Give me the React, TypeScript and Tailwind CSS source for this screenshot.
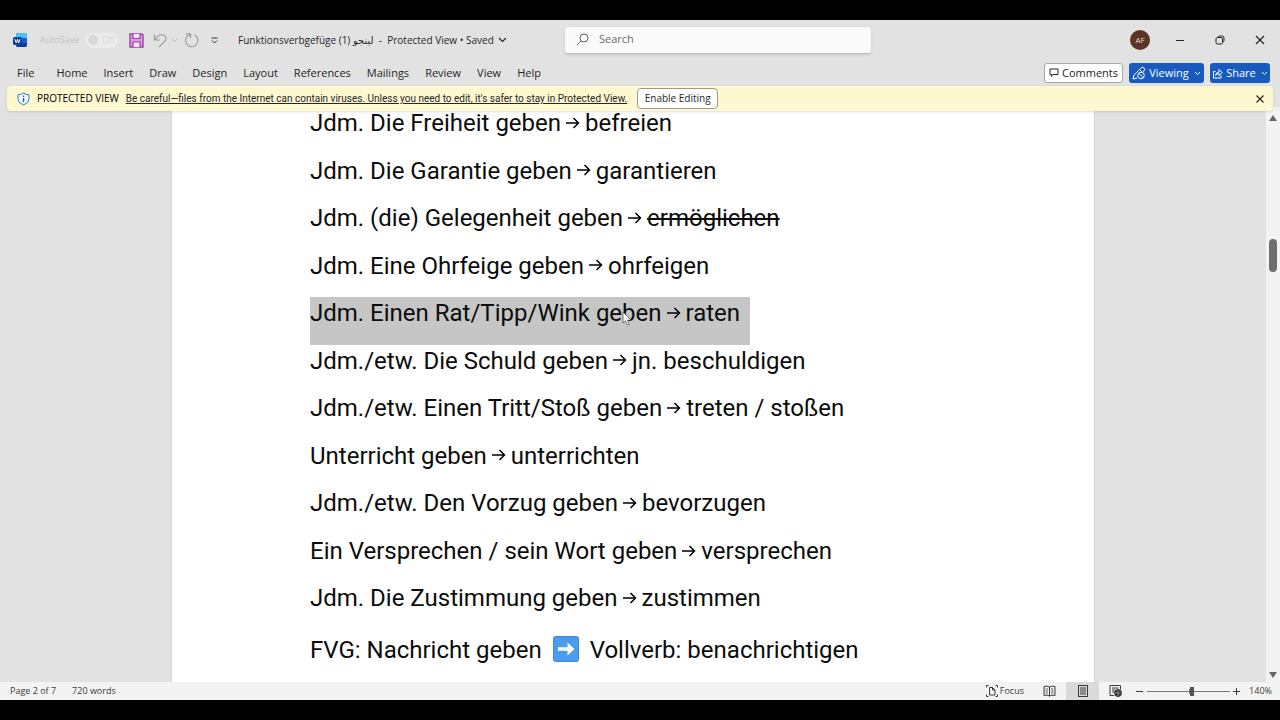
import { useState } from 'react'
import type { ReactNode } from 'react'
import { clsx } from 'clsx'

const tabs = ['Home', 'Insert', 'Draw', 'Design', 'Layout', 'References', 'Mailings', 'Review', 'View', 'Help']

interface Line {
  source: string
  target: string
  struck?: boolean
  selected?: boolean
}

const lines: Line[] = [
  { source: 'Jdm. Die Freiheit geben', target: 'befreien' },
  { source: 'Jdm. Die Garantie geben', target: 'garantieren' },
  { source: 'Jdm. (die) Gelegenheit geben', target: 'ermöglichen', struck: true },
  { source: 'Jdm. Eine Ohrfeige geben', target: 'ohrfeigen' },
  { source: 'Jdm. Einen Rat/Tipp/Wink geben', target: 'raten', selected: true },
  { source: 'Jdm./etw. Die Schuld geben', target: 'jn. beschuldigen' },
  { source: 'Jdm./etw. Einen Tritt/Stoß geben', target: 'treten / stoßen' },
  { source: 'Unterricht geben', target: 'unterrichten' },
  { source: 'Jdm./etw. Den Vorzug geben', target: 'bevorzugen' },
  { source: 'Ein Versprechen / sein Wort geben', target: 'versprechen' },
  { source: 'Jdm. Die Zustimmung geben', target: 'zustimmen' },
]

interface IconProps {
  w: number
  h: number
  className?: string
  children: ReactNode
}

function Icon({ w, h, className, children }: IconProps) {
  return (
    <svg
      width={w}
      height={h}
      viewBox={`0 0 ${w} ${h}`}
      fill="none"
      stroke="currentColor"
      className={clsx('shrink-0', className)}
      aria-hidden="true"
    >
      {children}
    </svg>
  )
}

function WordLogo() {
  return (
    <Icon w={14} h={14}>
      <g stroke="none">
        <rect x="3" y="0" width="11" height="14" rx="2" fill="#1b5be0" />
        <path d="M5 0h7a2 2 0 0 1 2 2v3H3V2a2 2 0 0 1 2-2z" fill="#4cc2f5" />
        <path d="M3 10h11v2a2 2 0 0 1-2 2H5a2 2 0 0 1-2-2z" fill="#123a9c" />
        <rect x="0" y="4" width="9" height="8" rx="1.5" fill="#0c3f9e" />
      </g>
      <path d="M2 6.2l1.2 3.6 1.3-3.4 1.3 3.4L7 6.2" stroke="#fff" strokeWidth="1" />
    </Icon>
  )
}

function Chevron({ className }: { className?: string }) {
  return (
    <Icon w={7} h={5} className={className}>
      <path d="M1 1l2.5 2.5L6 1" />
    </Icon>
  )
}

function TitleBar() {
  const [query, setQuery] = useState('')

  return (
    <div className="grid h-10 grid-cols-[565fr_306fr_409fr] items-center">
      <div className="flex min-w-0 items-center pl-[13px] whitespace-nowrap">
        <WordLogo />
        <label className="ml-[13px] flex items-center gap-2 text-[9px] text-[#c3c3c3]">
          <span className="w-[37px]">AutoSave</span>
          <input type="checkbox" disabled className="peer sr-only" />
          <span className="flex h-[15px] w-[33px] items-center gap-1 rounded-full bg-[#ebebeb] px-[3px] text-[#d6d6d6]">
            <span className="h-[10px] w-[10px] rounded-full bg-[#d8d8d8]" />
            Off
          </span>
        </label>
        <button aria-label="Save" className="ml-[11px]">
          <Icon w={15} h={15} className="text-[#9b3fa8]">
            <path d="M1 1h12l1 1v12H1z" fill="#d9a0e0" strokeWidth="1.4" />
            <path d="M4 1v4.5h7V1M4 14V9h7v5" fill="#f3e6f5" strokeWidth="1.2" />
          </Icon>
        </button>
        <button aria-label="Undo" className="ml-[9px] text-[#9c9c9c]">
          <Icon w={14} h={15}>
            <path d="M1.5 1.5V7H7M1.8 6.7L5 3.2c3-3.2 8.5-1 7.9 3-.2 1.2-.9 2-1.6 2.7L6 14" strokeWidth="1.2" />
          </Icon>
        </button>
        <button aria-label="Undo options" className="ml-1 text-[#b5b5b5]"><Chevron /></button>
        <button aria-label="Redo" className="ml-[6px] text-[#9c9c9c]">
          <Icon w={15} h={15}>
            <path d="M2 .8h4.5v4.5M6.3 1.5A6.2 6.2 0 1 0 10.5 2" strokeWidth="1.2" />
          </Icon>
        </button>
        <button aria-label="Customize toolbar" className="ml-3 text-[#333]">
          <Icon w={7} h={7}>
            <path d="M.5 1h6M1 3.5l2.5 2.5L6 3.5" />
          </Icon>
        </button>
        <button className="ml-5 flex items-center gap-1 text-[10px] text-[#262626]">
          <span className="whitespace-pre">Funktionsverbgefüge (1) لينجو  -  Protected View • Saved</span>
          <Icon w={9} h={6}>
            <path d="M1 1l3.5 3.5L8 1" strokeWidth="1.2" />
          </Icon>
        </button>
      </div>

      <label className="flex h-[27px] items-center gap-[10px] rounded-[3px] border-b border-[#c0c0c0] bg-[#fafafa] pl-[11px] text-[#666] shadow-sm">
        <Icon w={13} h={13}>
          <circle cx="8" cy="5" r="4" />
          <path d="M5 8L1 12" />
        </Icon>
        <input
          type="search"
          aria-label="Search"
          placeholder="Search"
          value={query}
          onChange={e => setQuery(e.target.value)}
          className="min-w-0 flex-1 bg-transparent text-[11px] outline-none placeholder:text-[#6b6b6b]"
        />
      </label>

      <div className="flex items-center justify-end pr-[14px] text-[#222]">
        <button className="h-5 w-5 rounded-full bg-[#5b3427] text-[8px] text-[#e9d9d2]">AF</button>
        <button aria-label="Minimize" className="ml-[25px]">
          <Icon w={10} h={10}><path d="M1 5.5h8" /></Icon>
        </button>
        <button aria-label="Restore" className="ml-[30px]">
          <Icon w={10} h={10}>
            <rect x="1" y="2.5" width="6.5" height="6.5" rx="1.5" />
            <path d="M3 2.2Q3 1 4.5 1H7q2 0 2 2v2.5Q9 7 7.8 7" />
          </Icon>
        </button>
        <button aria-label="Close" className="ml-[29px]">
          <Icon w={12} h={12}><path d="M2 2l8 8M10 2l-8 8" strokeWidth="1.2" /></Icon>
        </button>
      </div>
    </div>
  )
}

function RibbonTabs() {
  return (
    <div className="flex h-[26px] items-center pr-[10px] pl-[17px] text-[11px] text-[#262626]">
      <nav className="flex items-center gap-4">
        <button className="mr-[6px]">File</button>
        {tabs.map(tab => <button key={tab}>{tab}</button>)}
      </nav>
      <div className="ml-auto flex items-center gap-[6px]">
        <button className="flex h-5 w-[79px] items-center justify-center gap-[3px] rounded-[3px] border border-[#a8a8a8] bg-white">
          <Icon w={10} h={10}>
            <path d="M1 1h8v5.5H4L2.5 8.5V6.5H1z" />
          </Icon>
          Comments
        </button>
        <button className="flex h-5 w-[75px] items-center justify-center gap-[3px] rounded-[3px] bg-[#185abd] text-white">
          <Icon w={14} h={14}>
            <path d="M1 13l1-4 7-7q1.5-1.5 3 0t0 3L11 6M1 13l4-1" />
            <path d="M7.500 3.500l3 3" />
            <circle cx="9" cy="9.500" r="3.300" />
            <path d="M6.800 7.300l4.500 4.500" />
          </Icon>
          Viewing
          <Chevron className="ml-[2px]" />
        </button>
        <button className="flex h-5 w-[60px] items-center justify-center gap-[3px] rounded-[3px] bg-[#185abd] text-white">
          <Icon w={11} h={11}>
            <path d="M3.500 3.500H1.500v6.500h7.500V7.500" />
            <path d="M3.500 7.500Q4 4 7 4V1.500L10.200 4.700 7 7.500V5.700Q5 5.700 3.500 7.500z" />
          </Icon>
          Share
          <Chevron className="ml-[2px]" />
        </button>
      </div>
    </div>
  )
}

function ProtectedBar() {
  const [open, setOpen] = useState(true)
  if (!open) return null

  return (
    <div className="mx-[7px] flex h-[25px] items-center rounded-[4px] bg-[#fdf8d0] pr-[7px] pl-[10px] text-[10px] whitespace-nowrap text-[#262626] shadow-sm">
      <Icon w={13} h={14} className="text-[#2f7fa8]">
        <path d="M6.500 1Q9 2.800 12 2.800V7q0 4-5.500 6Q1 11 1 7V2.800Q4 2.800 6.500 1z" fill="#f4fbff" />
        <path d="M6.500 3.500V5M6.500 6v4" stroke="#1d62c4" strokeWidth="1.500" />
      </Icon>
      <span className="ml-[7px] text-black">PROTECTED VIEW</span>
      <a href="#protected-view" className="ml-[7px] font-['Roboto',sans-serif] underline">
        Be careful—files from the Internet can contain viruses. Unless you need to edit, it's safer to stay in Protected View.
      </a>
      <button className="ml-[10px] h-[21px] w-[81px] rounded-[4px] border border-[#9d9b8a] bg-white">Enable Editing</button>
      <button aria-label="Close message" onClick={() => setOpen(false)} className="ml-auto">
        <Icon w={12} h={12}><path d="M2.5 2.5l7 7M9.5 2.5l-7 7" strokeWidth="1.2" /></Icon>
      </button>
    </div>
  )
}

function Pointer() {
  return (
    <svg width="10" height="15" viewBox="0 0 10 15" className="absolute top-[14px] left-[312px]" aria-hidden="true">
      <path d="M1 1v11l2.500-2.300L5.300 14l2-.9-1.800-4H9z" fill="#fff" stroke="#555" strokeWidth=".8" />
    </svg>
  )
}

function Arrow() {
  return (
    <Icon w={14} h={14} className="mx-[5px] -mt-1 inline-block text-black">
      <path d="M0 7h12.500M7.500 2l5 5-5 5" strokeWidth="1.500" />
    </Icon>
  )
}

function Document() {
  return (
    <main className="flex min-w-0 flex-1">
      <article
        lang="de"
        className="mx-auto flex w-full max-w-[924px] flex-col border-x border-[#d8d8d8] bg-white pl-[138px] font-['Roboto','Noto_Sans',sans-serif] text-[24px] leading-8 whitespace-nowrap text-[#0c0c0c]"
      >
        {lines.map(line => (
          <p key={line.source} className="flex min-h-10 flex-1">
            <span className={clsx(line.selected && 'relative bg-[#c6c6c6] pr-[10px]')}>
              {line.source}
              <Arrow />
              <span className={clsx(line.struck && 'line-through decoration-2')}>{line.target}</span>
              {line.selected && <Pointer />}
            </span>
          </p>
        ))}
        <p className="flex h-[52px] items-start pt-1">
          FVG: Nachricht geben
          <Icon w={26} h={26} className="mx-[11px] mt-[2px]">
            <rect x=".5" y=".5" width="25" height="25" rx="2" fill="#4b9bee" stroke="#3f86d4" />
            <path d="M5 11.200h9.500V6.500L21.500 13l-7 6.500v-4.700H5z" fill="#fff" stroke="none" />
          </Icon>
          Vollverb: benachrichtigen
        </p>
      </article>
    </main>
  )
}

function ScrollBar() {
  return (
    <div className="flex w-[14px] flex-col items-center bg-[#f3f3f3] pt-2 pb-1 text-[#666]">
      <button aria-label="Scroll up">
        <Icon w={8} h={6} className="block"><path d="M4 0l4 6H0z" fill="currentColor" stroke="none" /></Icon>
      </button>
      <div className="flex w-full flex-1 flex-col items-center">
        <div className="flex-[115]" />
        <div className="h-[33px] w-2 rounded-full bg-[#6e6e6e]" />
        <div className="flex-[390]" />
      </div>
      <button aria-label="Scroll down">
        <Icon w={8} h={6} className="block"><path d="M4 6l4-6H0z" fill="currentColor" stroke="none" /></Icon>
      </button>
    </div>
  )
}

function StatusBar() {
  const [zoom, setZoom] = useState(55)

  return (
    <footer className="flex h-[18px] items-center bg-[#f3f3f3] pr-2 pl-[10px] text-[9px] whitespace-nowrap text-[#3a3a3a]">
      <span>Page 2 of 7</span>
      <span className="ml-4">720 words</span>
      <button className="ml-auto flex items-center gap-[2px]">
        <Icon w={12} h={12}>
          <path d="M2.500 .5h-2v2M9.500 .5h2v2M2.500 11.500h-2v-2M9.500 11.500h2v-2" />
          <path d="M3.500 2.500h3l2.500 2.500v5H3.500zM6.500 2.500V5H9" />
        </Icon>
        Focus
      </button>
      <button aria-label="Read mode" className="ml-[19px]">
        <Icon w={13} h={12}>
          <path d="M6.500 2Q4 .5 1 1.500v9q3-1 5.500.5 2.500-1.500 5.500-.5v-9Q9 .5 6.500 2zM6.500 2v9" />
          <path d="M2.500 4h2.500M2.500 6h2.500M2.500 8h2.500M8 4h2.500M8 6h2.500M8 8h2.500" strokeWidth=".8" />
        </Icon>
      </button>
      <button aria-label="Print layout" className="ml-[10px] flex h-[18px] w-[33px] items-center justify-center bg-[#dadada]">
        <Icon w={10} h={12}>
          <rect x=".5" y=".5" width="9" height="11" />
          <path d="M2 3h6M2 5h6M2 7h6M2 9h6" />
        </Icon>
      </button>
      <button aria-label="Web layout" className="ml-[10px]">
        <Icon w={13} h={12}>
          <path d="M5 10.500H1V.5h10.500v4M3 3h6.500M3 5h3M3 7h2" />
          <circle cx="9" cy="8" r="3.500" fill="#333" />
          <path d="M6 8h6M9 5v6" stroke="#bbb" strokeWidth=".6" />
        </Icon>
      </button>
      <button aria-label="Zoom out" className="ml-[14px]">
        <Icon w={7} h={7}><path d="M0 3.500h7" /></Icon>
      </button>
      <div className="relative ml-1 flex w-[83px] items-center">
        <input
          type="range"
          aria-label="Zoom"
          value={zoom}
          onChange={e => setZoom(Number(e.target.value))}
          className="h-px w-full appearance-none bg-[#777] [&::-webkit-slider-thumb]:h-[9px] [&::-webkit-slider-thumb]:w-1 [&::-webkit-slider-thumb]:appearance-none [&::-webkit-slider-thumb]:bg-[#555]"
        />
        <span className="absolute left-1/2 h-[5px] w-px bg-[#777]" />
      </div>
      <button aria-label="Zoom in" className="ml-[3px]">
        <Icon w={7} h={7}><path d="M0 3.500h7M3.500 0v7" /></Icon>
      </button>
      <span className="w-8 text-right">140%</span>
    </footer>
  )
}

export default function App() {
  return (
    <div className="flex min-h-screen flex-col border-y-[20px] border-black bg-[#e2e2e2] font-['Open_Sans','Noto_Sans','DejaVu_Sans',sans-serif]">
      <header className="relative z-10">
        <TitleBar />
        <RibbonTabs />
        <ProtectedBar />
      </header>
      <div className="-mt-1 flex flex-1">
        <Document />
        <ScrollBar />
      </div>
      <StatusBar />
    </div>
  )
}
